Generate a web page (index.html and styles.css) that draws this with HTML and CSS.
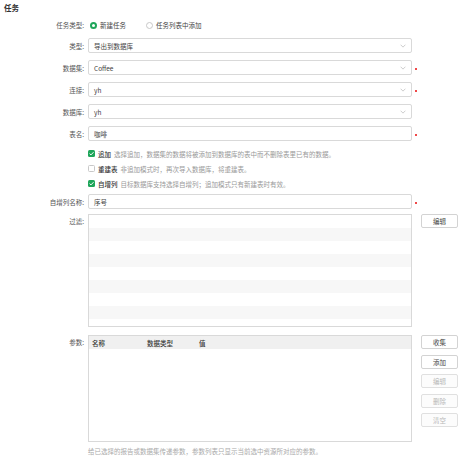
FILE: index.html
```html
<!DOCTYPE html>
<html lang="zh">
<head>
<meta charset="utf-8">
<link rel="stylesheet" href="styles.css">
</head>
<body>
<div class="page">
  <div class="title">任务</div>

  <div class="row row-radio">
    <div class="label">任务类型:</div>
    <div class="field radios">
      <span class="radio on"></span><span class="rtext">新建任务</span>
      <span class="radio off"></span><span class="rtext">任务列表中添加</span>
    </div>
  </div>

  <div class="row row-input first">
    <div class="label">类型:</div>
    <div class="field input select"><span>导出到数据库</span><svg class="chev" viewBox="0 0 8 5"><path d="M0.8 0.8 L4 4 L7.2 0.8" fill="none" stroke="#b5b5b5" stroke-width="0.9"/></svg></div>
  </div>

  <div class="row row-input">
    <div class="label">数据集:</div>
    <div class="field input select"><span>Coffee</span><svg class="chev" viewBox="0 0 8 5"><path d="M0.8 0.8 L4 4 L7.2 0.8" fill="none" stroke="#b5b5b5" stroke-width="0.9"/></svg></div>
    <span class="req"></span>
  </div>

  <div class="row row-input">
    <div class="label">连接:</div>
    <div class="field input select"><span>yh</span><svg class="chev" viewBox="0 0 8 5"><path d="M0.8 0.8 L4 4 L7.2 0.8" fill="none" stroke="#b5b5b5" stroke-width="0.9"/></svg></div>
    <span class="req"></span>
  </div>

  <div class="row row-input">
    <div class="label">数据库:</div>
    <div class="field input select"><span>yh</span><svg class="chev" viewBox="0 0 8 5"><path d="M0.8 0.8 L4 4 L7.2 0.8" fill="none" stroke="#b5b5b5" stroke-width="0.9"/></svg></div>
  </div>

  <div class="row row-input">
    <div class="label">表名:</div>
    <div class="field input"><span>咖啡</span></div>
    <span class="req"></span>
  </div>

  <div class="checks">
    <div class="row row-check">
      <div class="label"></div>
      <div class="field"><span class="cb on"><svg viewBox="0 0 8 8"><path d="M1.8 4.1 L3.4 5.6 L6.3 2.5" fill="none" stroke="#fff" stroke-width="1.1"/></svg></span><span class="cname">追加</span><span class="cdesc">选择追加，数据集的数据将被添加到数据库的表中而不删除表里已有的数据。</span></div>
    </div>
    <div class="row row-check">
      <div class="label"></div>
      <div class="field"><span class="cb off"></span><span class="cname">重建表</span><span class="cdesc">非追加模式时，再次导入数据库，将重建表。</span></div>
    </div>
    <div class="row row-check">
      <div class="label"></div>
      <div class="field"><span class="cb on"><svg viewBox="0 0 8 8"><path d="M1.8 4.1 L3.4 5.6 L6.3 2.5" fill="none" stroke="#fff" stroke-width="1.1"/></svg></span><span class="cname">自增列</span><span class="cdesc">目标数据库支持选择自增列；追加模式只有新建表时有效。</span></div>
    </div>
  </div>

  <div class="row row-input auto">
    <div class="label">自增列名称:</div>
    <div class="field input"><span>序号</span></div>
    <span class="req"></span>
  </div>

  <div class="row row-top filter-row">
    <div class="label">过滤:</div>
    <div class="field filter"></div>
    <div class="btns"><button class="btn">编辑</button></div>
  </div>

  <div class="row row-top params-row">
    <div class="label">参数:</div>
    <div class="field params">
      <div class="phead"><span class="c1">名称</span><span class="c2">数据类型</span><span class="c3">值</span></div>
    </div>
    <div class="btns">
      <button class="btn">收集</button>
      <button class="btn">添加</button>
      <button class="btn dis">编辑</button>
      <button class="btn dis">删除</button>
      <button class="btn dis">清空</button>
    </div>
  </div>

  <div class="row foot">
    <div class="label"></div>
    <div class="note">给已选择的报告或数据集传递参数，参数列表只显示当前选中资源所对应的参数。</div>
  </div>
</div>
</body>
</html>
```

FILE: styles.css
```css
* { box-sizing: border-box; }
html, body { margin: 0; padding: 0; background: #fff; }
body {
  font-family: "Noto Sans CJK SC", "Noto Sans", sans-serif;
  font-size: 6.5px;
  color: #333;
}
.page { padding: 3px 0 0 0; width: 466px; }
.title {
  font-weight: bold;
  font-size: 7.5px;
  color: #333;
  padding-left: 4px;
  height: 10px;
  line-height: 10px;
}
.row { display: flex; align-items: center; }
.label {
  width: 88px;
  flex: none;
  padding-right: 4px;
  text-align: right;
  color: #555;
  white-space: nowrap;
}
.field { width: 324px; flex: none; }
.row-radio { height: 14px; margin-top: 5px; }
.radios { display: flex; align-items: center; padding-left: 2px; }
.radio {
  width: 7px; height: 7px; border-radius: 50%;
  display: inline-block; flex: none;
}
.radio.on { border: 2px solid #1fa65a; background: #fff; }
.radio.off { border: 1px solid #c8c8c8; background: #fff; margin-left: 20px; }
.rtext { margin-left: 3px; color: #444; }
.row-input { height: 15px; margin-top: 7px; }
.row-input.first { margin-top: 6px; }
.input {
  height: 15px;
  border: 1px solid #d9d9d9;
  border-radius: 2px;
  display: flex;
  align-items: center;
  padding: 0 5px;
  color: #444;
  background: #fff;
}
.input span { flex: 1; }
.chev { width: 6px; height: 4px; flex: none; margin-right: 0px; }
.req {
  width: 2px; height: 2px; background: #f04848;
  margin-left: 3px; margin-top: 2px;
}
.checks { margin-top: 5px; }
.row-check { height: 15px; }
.row-check .field { display: flex; align-items: center; }
.cb {
  width: 7px; height: 7px; border-radius: 1.5px; flex: none;
  display: inline-flex; align-items: center; justify-content: center;
}
.cb svg { width: 7px; height: 7px; }
.cb.on { background: #1fa65a; }
.cb.off { border: 1px solid #c8c8c8; background: #fff; }
.cname { margin-left: 3px; color: #333; font-weight: 500; }
.cdesc { margin-left: 3px; color: #999; white-space: nowrap; }
.row-input.auto { margin-top: 3px; }
.row-top { align-items: flex-start; }
.row-top .label { padding-top: 2px; }
.filter-row { margin-top: 5px; }
.filter {
  height: 113px;
  border: 1px solid #d9d9d9;
  background: repeating-linear-gradient(to bottom, #fff 0, #fff 13px, #f7f7f7 13px, #f7f7f7 26px);
}
.btns { margin-left: 9px; display: flex; flex-direction: column; gap: 5.5px; }
.btn {
  width: 37px; height: 14px;
  border: 1px solid #d3d3d3;
  border-radius: 2px;
  background: #fff;
  font-family: inherit;
  font-size: 6.5px;
  color: #444;
  padding: 0;
  line-height: 12px;
  text-align: center;
}
.btn.dis { color: #b8b8b8; border-color: #e0e0e0; background: #fcfcfc; }
.params-row { margin-top: 8px; }
.params {
  height: 107px;
  border: 1px solid #d9d9d9;
  background: #fff;
}
.phead {
  height: 13px;
  background: #f0f0f0;
  display: flex;
  align-items: center;
  color: #333;
  font-weight: 500;
}
.phead .c1 { width: 55px; padding-left: 3px; }
.phead .c2 { width: 52px; padding-left: 3px; }
.phead .c3 { padding-left: 3px; }
.foot { margin-top: 4px; height: 10px; }
.note { color: #aaa; white-space: nowrap; }
```
